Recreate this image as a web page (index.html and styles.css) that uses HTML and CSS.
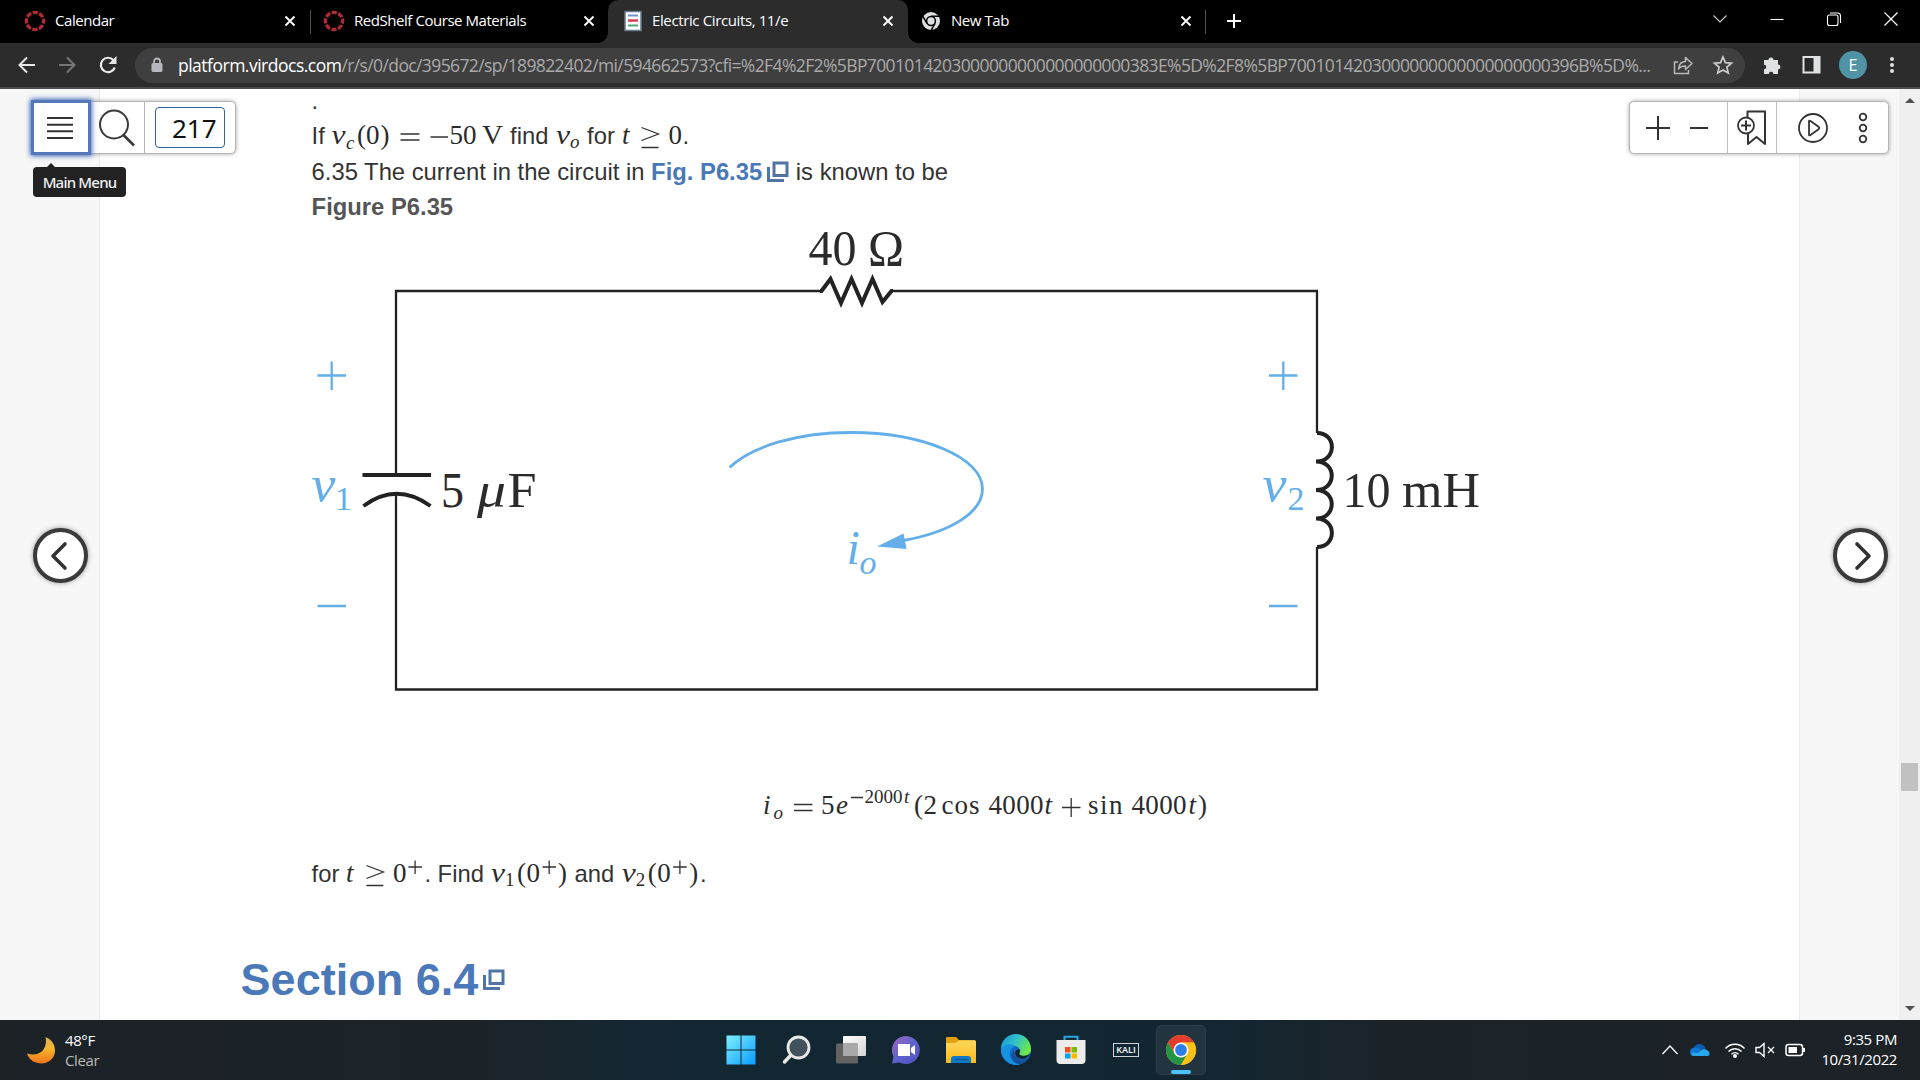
FILE: index.html
```html
<!DOCTYPE html>
<html lang="en">
<head>
<meta charset="utf-8">
<title>Electric Circuits, 11/e</title>
<link rel="stylesheet" href="styles.css">
</head>
<body>
<svg class="defs" width="0" height="0">
  <defs>
    <symbol id="x" viewBox="0 0 12 12"><path d="M1.5 1.5l9 9M10.5 1.5l-9 9" stroke="#fff" stroke-width="1.9"/></symbol>
    <symbol id="ring" viewBox="0 0 22 22"><circle cx="11" cy="11" r="8.6" fill="none" stroke="#b02a35" stroke-width="3.400" stroke-dasharray="5.2 1.55" stroke-dashoffset="2.6"/></symbol>
    <symbol id="popup" viewBox="0 0 22 22"><path d="M7 2h13v12.500H7z M1.5 6v13.500H17" fill="none" stroke="#5075a5" stroke-width="3"/></symbol>
    <linearGradient id="win" x1="0" y1="0" x2="1" y2="1"><stop offset="0" stop-color="#7df0ff"/><stop offset="1" stop-color="#0a9bff"/></linearGradient>
    <linearGradient id="moon" x1="0" y1="0" x2="0" y2="1"><stop offset="0" stop-color="#d8b05a"/><stop offset=".45" stop-color="#f6b52e"/><stop offset="1" stop-color="#f0731c"/></linearGradient>
    <linearGradient id="chat" x1="0" y1="0" x2="1" y2="1"><stop offset="0" stop-color="#a169b8"/><stop offset=".5" stop-color="#5f62cc"/><stop offset="1" stop-color="#4f51c0"/></linearGradient>
    <linearGradient id="fold" x1="0" y1="0" x2="0" y2="1"><stop offset="0" stop-color="#ffd75e"/><stop offset="1" stop-color="#fbb917"/></linearGradient>
    <linearGradient id="edge" x1="0" y1="0" x2="1" y2=".5"><stop offset="0" stop-color="#1793d6"/><stop offset=".5" stop-color="#2fc0cf"/><stop offset="1" stop-color="#6ae84a"/></linearGradient>
    <linearGradient id="tv" x1="0" y1="0" x2="1" y2="1"><stop offset="0" stop-color="#fff"/><stop offset="1" stop-color="#d4d4d4"/></linearGradient>
  </defs>
</svg>

<header class="tabs">
  <div class="tab"><svg class="fav" width="22" height="22"><use href="#ring"/></svg><span class="t1">Calendar</span><svg class="close" width="12" height="12"><use href="#x"/></svg></div>
  <div class="tab second"><svg class="fav" width="22" height="22"><use href="#ring"/></svg><span class="t2">RedShelf Course Materials</span><svg class="close" width="12" height="12"><use href="#x"/></svg></div>
  <div class="tab active"><svg class="fav" width="22" height="22" viewBox="0 0 22 22"><path d="M3 1.5h16v19H3z" fill="#fff" stroke="#66788a" stroke-width="1.5"/><path d="M6 5.5h10" stroke="#6c8fd8" stroke-width="2"/><path d="M6 10.5h10" stroke="#d03a42" stroke-width="2.4"/><path d="M6 15.5h10" stroke="#4da77c" stroke-width="2"/></svg><span class="t3">Electric Circuits, 11/e</span><svg class="close" width="12" height="12"><use href="#x"/></svg></div>
  <div class="tab last"><svg class="fav" width="22" height="22" viewBox="0 0 22 22"><circle cx="11" cy="11" r="9" fill="#dedfe0"/><circle cx="11" cy="11" r="4.4" fill="#dedfe0" stroke="#000" stroke-width="1.5"/><path d="M11 6.2h8M6.9 13.4l-4-7M15.1 13.4l-4 7" stroke="#000" stroke-width="1.5"/></svg><span class="t4">New Tab</span><svg class="close" width="12" height="12"><use href="#x"/></svg></div>
  <svg class="plus" width="16" height="16" viewBox="0 0 16 16"><path d="M8 1v14M1 8h14" stroke="#fff" stroke-width="2"/></svg>
  <div class="win">
    <svg width="16" height="16" viewBox="0 0 16 16"><path d="M1.5 4.500L8 11l6.500-6.500" fill="none" stroke="#ccc" stroke-width="1.1"/></svg>
    <svg width="16" height="16" viewBox="0 0 16 16"><path d="M1.500 8.500h13" stroke="#fff" stroke-width="1.100"/></svg>
    <svg width="16" height="16" viewBox="0 0 16 16"><rect x="1.500" y="4" width="10.500" height="10.500" rx="2" fill="none" stroke="#fff" stroke-width="1.100"/><path d="M4 2h7.500a3 3 0 0 1 3 3v7" fill="none" stroke="#fff" stroke-width="1.100"/></svg>
    <svg width="16" height="16" viewBox="0 0 16 16"><path d="M1.500 1.500l13 13M14.500 1.500l-13 13" stroke="#fff" stroke-width="1.200"/></svg>
  </div>
</header>

<nav class="toolbar">
  <svg class="back" width="20" height="20" viewBox="0 0 20 20"><path d="M18 10H3M10 2.500L2.500 10l7.500 7.500" fill="none" stroke="#e8e8e8" stroke-width="2"/></svg>
  <svg class="fwd" width="20" height="20" viewBox="0 0 20 20"><path d="M2 10h15M10 2.500l7.500 7.500-7.500 7.500" fill="none" stroke="#767676" stroke-width="2"/></svg>
  <svg class="reload" width="20" height="20" viewBox="0 0 20 20"><path d="M16.800 12.500A7.200 7.200 0 1 1 15.500 5.200" fill="none" stroke="#e8e8e8" stroke-width="2.200"/><path d="M18.500 1v8h-8z" fill="#e8e8e8"/></svg>
  <div class="omni">
    <svg class="lock" width="12" height="16" viewBox="0 0 12 16"><rect x=".5" y="6" width="11" height="9" rx="1.500" fill="#b4b7bb"/><path d="M3 7V4.500a3 3 0 0 1 6 0V7" fill="none" stroke="#b4b7bb" stroke-width="1.800"/></svg>
    <span class="url"><b>platform.virdocs.com</b>/r/s/0/doc/395672/sp/189822402/mi/594662573?cfi=%2F4%2F2%5BP7001014203000000000000000000383E%5D%2F8%5BP7001014203000000000000000000396B%5D%...</span>
    <svg class="share" width="20" height="20" viewBox="0 0 20 20"><path d="M5 7H1.500v11.500h14V15" fill="none" stroke="#b9b9b9" stroke-width="1.500"/><path d="M5.500 14c.5-5 3-7.500 7-7.500V2.500L19 8.500l-6.500 6V11c-3.500 0-5.500 1-7 3z" fill="none" stroke="#b9b9b9" stroke-width="1.500" stroke-linejoin="round"/></svg>
    <svg class="star" width="20" height="20" viewBox="0 0 20 20"><path d="M10 2l2.400 5.600 6.100.5-4.600 4 1.400 6L10 14.900 4.700 18.100l1.400-6-4.600-4 6.100-.5z" fill="none" stroke="#ccc" stroke-width="1.700"/></svg>
  </div>
  <svg class="puzzle" width="20" height="20" viewBox="0 0 20 20"><path d="M2 5h4.500a2.500 2.500 0 1 1 5 0H16v4.500a2.400 2.400 0 1 1 0 4.900V19h-4.600a2.300 2.300 0 1 0-4.600 0H2v-4.700a2.300 2.300 0 1 0 0-4.600z" fill="#e0e1e3"/></svg>
  <svg class="side" width="20" height="20" viewBox="0 0 20 20"><rect x="1.500" y="2" width="16" height="15.500" fill="#292929" stroke="#e0e1e3" stroke-width="2"/><path d="M11.500 2h6v15.500h-6z" fill="#e0e1e3"/></svg>
  <div class="avatar">E</div>
  <svg class="kebab" width="6" height="18" viewBox="0 0 6 18"><g fill="#e0e1e3"><circle cx="3" cy="3" r="2"/><circle cx="3" cy="9" r="2"/><circle cx="3" cy="15" r="2"/></g></svg>
</nav>

<main class="view">
  <article class="doc">
    <p class="line dot">.</p>
    <p class="line">If <svg class="math" width="172" height="30" viewBox="331 122 172 30"><g font-size="27"><text x="331.500" y="144" class="i" textLength="14" lengthAdjust="spacingAndGlyphs">v</text><text x="346" y="148.500" class="i" font-size="19">c</text><text x="357" y="144">(</text><text x="366" y="144" textLength="13">0</text><text x="380.500" y="144">)</text><text x="449.500" y="144">50</text><text x="482" y="144" textLength="21" lengthAdjust="spacingAndGlyphs">V</text></g><path d="M400.500 134h19M400.500 140h19M430.500 137h17.500" class="r"/></svg> find <svg class="math" width="25.4" height="30" viewBox="554.6 122 25.4 30"><text x="555.500" y="144" class="i" font-size="27" textLength="14" lengthAdjust="spacingAndGlyphs">v</text><text x="569.500" y="148.500" class="i" font-size="19">o</text></svg> for <svg class="math" width="61" height="30" viewBox="621 122 61 30"><text x="622" y="144" class="i" font-size="27">t</text><path d="M641.500 127.500l17 6.500-17 6.500M641.500 147.500h17" class="r"/><text x="668.500" y="144" font-size="27">0</text></svg>.</p>
    <p class="line">6.35 The current in the circuit in <a class="link">Fig. P6.35</a><svg class="pop" width="22" height="22"><use href="#popup"/></svg> is known to be</p>
    <p class="line cap">Figure P6.35</p>

    <svg class="circuit" width="1200" height="500" viewBox="311 222 1200 500">
      <g fill="none" stroke="#222" stroke-width="2.300">
        <path d="M396 475V291H821M892 291H1317V433M396 494V689.500H1317V547"/>
        <path d="M820 291h1.500l9-12 10.500 24 10.500-24L862 303l10.500-24L882.500 302l9-11h1.500" stroke-width="4"/>
        <path d="M362.500 475h68.500M363.500 506q33-24.500 67 0" stroke-width="4"/>
        <path d="M1317 433c20 0 20 28.500-1 28.500c21 0 21 28.500 0 28.500c21 0 21 28.500 0 28.500c21 0 21 28.500 1 28.500" stroke-width="4"/>
      </g>
      <g fill="none" stroke="#64aeea" stroke-width="2.300">
        <path d="M317.500 375.500h28.500M331.700 361.500v28.500M317.500 606h28.500M1269 375.500h28.500M1283.300 361.500v28.500M1269 606h28.500"/>
        <path d="M729.500 467.500C752 446 798 432.500 851 432.500c72 0 131.500 25 131.500 56.500c0 23-31 43-79 51.500" stroke-width="2.800"/>
        <path d="M877 546.500l26.500-13 3 15.500z" fill="#64aeea" stroke="none"/>
      </g>
      <g fill="#222" font-size="50">
        <text x="808.500" y="265" textLength="48" lengthAdjust="spacingAndGlyphs">40</text><text x="868" y="265" textLength="36" lengthAdjust="spacingAndGlyphs">Ω</text>
        <text x="441" y="507" textLength="23" lengthAdjust="spacingAndGlyphs">5</text><text x="477" y="507" class="i" textLength="29" lengthAdjust="spacingAndGlyphs">μ</text><text x="507.500" y="507" textLength="29" lengthAdjust="spacingAndGlyphs">F</text>
        <text x="1342.500" y="507" textLength="48" lengthAdjust="spacingAndGlyphs">10</text><text x="1402" y="507" textLength="78" lengthAdjust="spacingAndGlyphs">mH</text>
      </g>
      <g class="blue" font-size="50">
        <text x="311.500" y="501" class="i" textLength="24" lengthAdjust="spacingAndGlyphs">v</text><text x="335" y="510" font-size="34">1</text>
        <text x="1262.500" y="501" class="i" textLength="24" lengthAdjust="spacingAndGlyphs">v</text><text x="1287.500" y="510" font-size="34">2</text>
        <text x="846.500" y="563.500" class="i" font-size="48">i</text><text x="859.500" y="573.500" class="i" font-size="34">o</text>
      </g>
    </svg>

    <svg class="equation" width="460" height="48" viewBox="757 782 460 48">
      <g font-size="27"><text x="763" y="814" class="i">i</text><text x="773.500" y="818.500" class="i" font-size="19">o</text><text x="821" y="814">5</text><text x="836" y="814" class="i">e</text><text x="864.500" y="803" font-size="19" textLength="38">2000</text><text x="904" y="803" font-size="19" class="i">t</text><text x="914" y="814">(</text><text x="923.500" y="814">2</text><text x="941.500" y="814" textLength="38">cos</text><text x="988.500" y="814" textLength="55">4000</text><text x="1044.500" y="814" class="i">t</text><text x="1088" y="814" textLength="34.500">sin</text><text x="1131.500" y="814" textLength="55">4000</text><text x="1188.500" y="814" class="i">t</text><text x="1198" y="814">)</text></g>
      <path d="M794 804.500h18.500M794 810.500h18.500M851 797.500h12M1062 807.500h18.500M1071.200 798v19" class="r"/>
    </svg>

    <p class="line find">for <svg class="math" width="78.4" height="30" viewBox="345.6 861 78.4 30"><g font-size="27"><text x="345.500" y="883" class="i">t</text><text x="392.500" y="883">0</text></g><path d="M366 866.500l17 6.500-17 6.500M366 886.500h17M408 868h13.500M414.700 861.500v13.500" class="r"/></svg>. Find <svg class="math" width="77.4" height="30" viewBox="490 861 77.4 30"><g font-size="27"><text x="490" y="883" class="i" textLength="14" lengthAdjust="spacingAndGlyphs">v</text><text x="504" y="887" font-size="19">1</text><text x="516" y="883">(</text><text x="525.500" y="883">0</text><text x="557" y="883">)</text></g><path d="M541.500 868H555M548.200 861.500v13.500" class="r"/></svg> and <svg class="math" width="79.2" height="30" viewBox="620.3 861 79.2 30"><g font-size="27"><text x="621" y="883" class="i" textLength="14" lengthAdjust="spacingAndGlyphs">v</text><text x="635" y="887" font-size="19">2</text><text x="647" y="883">(</text><text x="656.500" y="883">0</text><text x="688.500" y="883">)</text></g><path d="M672.500 868H686M679.200 861.500v13.500" class="r"/></svg>.</p>
    <h2>Section 6.4<svg class="pop2" width="22" height="22"><use href="#popup"/></svg></h2>
  </article>

  <div class="bar left">
    <div class="menu"><svg width="28" height="24" viewBox="0 0 28 24"><path d="M1 2h26M1 8.700h26M1 15.300h26M1 22h26" stroke="#333" stroke-width="2"/></svg></div>
    <svg class="search" width="38" height="38" viewBox="0 0 38 38"><circle cx="16" cy="15.500" r="14" fill="none" stroke="#3a3a3a" stroke-width="2"/><path d="M25.500 26l10.500 10.500" stroke="#3a3a3a" stroke-width="2.600"/></svg>
    <div class="pagebox"><span class="pageno">217</span></div>
    <div class="tip">Main Menu</div>
  </div>

  <div class="bar right">
    <div class="zoom">
      <svg width="24" height="24" viewBox="0 0 24 24"><path d="M12 0v24M0 12h24" stroke="#333" stroke-width="2"/></svg>
      <svg width="18" height="24" viewBox="0 0 18 24"><path d="M0 12h18" stroke="#333" stroke-width="2"/></svg>
    </div>
    <div class="mark"><svg width="30" height="36" viewBox="0 0 30 36"><path d="M10.500 12V1.500h17.500V34l-8.500-7-8.500 7V22" fill="none" stroke="#333" stroke-width="2" stroke-linejoin="round"/><circle cx="9" cy="15.500" r="8" fill="#fff" stroke="#333" stroke-width="1.800"/><path d="M9 10.500v10M4 15.500h10" stroke="#333" stroke-width="2"/></svg></div>
    <div class="play">
      <svg width="32" height="32" viewBox="0 0 32 32"><circle cx="16" cy="16" r="14" fill="none" stroke="#333" stroke-width="1.800"/><path d="M12 9.500q0-1.500 1.500-.5l8 5.800q1.500 1.200 0 2.400l-8 5.800q-1.500 1-1.500-.5z" fill="none" stroke="#333" stroke-width="1.800"/></svg>
      <svg width="10" height="32" viewBox="0 0 10 32"><g fill="none" stroke="#333" stroke-width="1.800"><circle cx="5" cy="5" r="3.300"/><circle cx="5" cy="16" r="3.300"/><circle cx="5" cy="27" r="3.300"/></g></svg>
    </div>
  </div>

  <div class="nav prev"><svg width="48" height="48" viewBox="0 0 48 48"><path d="M28 12L16 24l12 12" fill="none" stroke="#333" stroke-width="3.600" stroke-linecap="round" stroke-linejoin="round"/></svg></div>
  <div class="nav next"><svg width="48" height="48" viewBox="0 0 48 48"><path d="M20 12l12 12-12 12" fill="none" stroke="#333" stroke-width="3.600" stroke-linecap="round" stroke-linejoin="round"/></svg></div>

  <div class="scroll">
    <svg width="10" height="5" viewBox="0 0 10 5"><path d="M0 5l5-5 5 5z" fill="#505050"/></svg>
    <div class="thumb"></div>
    <svg width="10" height="5" viewBox="0 0 10 5"><path d="M0 0l5 5 5-5z" fill="#505050"/></svg>
  </div>
</main>

<footer class="task">
  <div class="weather">
    <svg width="30" height="30" viewBox="0 0 30 30"><path d="M19.500 2C25 4 29 9 29 15.500 29 23 23 28.500 15.500 28.500 9 28.500 3 25 1 18.500c7 2.500 13 .5 16.500-4C20 11 20.500 6 19.500 2z" fill="url(#moon)"/></svg>
    <div class="wx"><span>48°F</span><span class="dim">Clear</span></div>
  </div>
  <div class="apps">
    <div class="app"><svg width="30" height="30" viewBox="0 0 30 30"><path d="M.5.500h14v14h-14zM15.500.500h14v14h-14zM.5 15.500h14v14h-14zM15.500 15.500h14v14h-14z" fill="url(#win)"/></svg></div>
    <div class="app"><svg width="30" height="30" viewBox="0 0 30 30"><path d="M10 20L3.500 27" stroke="#e8e8e8" stroke-width="3.500" stroke-linecap="round"/><circle cx="17.500" cy="12.500" r="10.500" fill="#42525c" stroke="#e8e8e8" stroke-width="2.800"/></svg></div>
    <div class="app"><svg width="30" height="30" viewBox="0 0 30 30"><rect x="7" y="1" width="23" height="20" rx="1" fill="url(#tv)"/><rect x="0" y="8.500" width="22" height="20" rx="1" fill="#626262"/><path d="M7 8.500h15V21H7z" fill="#a9a9a9"/></svg></div>
    <div class="app"><svg width="30" height="30" viewBox="0 0 30 30"><path d="M15 1a14 14 0 1 1-6.500 26.500L1 28.500l1.500-7A14 14 0 0 1 15 1z" fill="url(#chat)"/><path d="M7 9h12v12H7zM20 13l4-3v10l-4-3z" fill="#fff"/></svg></div>
    <div class="app"><svg width="30" height="30" viewBox="0 0 30 30"><path d="M0 3q0-1 1-1h9l3 3h16v6H0z" fill="#e29f10"/><path d="M0 8l10-.2 3-2.300h16q1 0 1 1V28H0z" fill="url(#fold)"/><path d="M5 28v-4q0-3 3-3h14q3 0 3 3v4z" fill="#0f78c8"/><path d="M9 24.500h12.500" stroke="#0b5292" stroke-width="1.200"/></svg></div>
    <div class="app"><svg width="30" height="30" viewBox="0 0 30 30"><circle cx="15" cy="15" r="15" fill="#1267c4"/><path d="M0 15A15 15 0 0 1 30 13c.5 6-4 8.500-9 8-4-.4-3.500-2.500-2.500-3.500 1.500-4-2-6.500-5.500-6.500C6 10 1 12 0 15z" fill="url(#edge)"/><path d="M0 15C2 9 10 8 14 11c-6 3-7 10-3 14 2 2.500 5 4 8 4.400C9 32 0 24 0 15z" fill="#1591df"/><path d="M14 14c-3 6 3 13 13 9.500-2 3-5 5.500-8.500 6C11 28 8 20 14 14z" fill="#14509a"/><path d="M19 16.500c-1.500 2-.5 4 3 4.300 3 .3 6-1 7-2.500-2 4.500-5 6.200-9 5.500-5-1-7-5-5-8 1-2.300 5-2.300 4 .7z" fill="#122632"/></svg></div>
    <div class="app"><svg width="30" height="30" viewBox="0 0 30 30"><path d="M8.500 6V1.800h13V6" fill="none" stroke="#28a8e0" stroke-width="2"/><path d="M.5 5h29v20q0 4-4 4h-21q-4 0-4-4z" fill="#ececec"/><path d="M9 12h5.500v5.500H9z" fill="#f25022"/><path d="M15.500 12H21v5.500h-5.500z" fill="#7fba00"/><path d="M9 18.500h5.500v5H9z" fill="#00a4ef"/><path d="M15.500 18.500H21v5h-5.500z" fill="#ffb900"/></svg></div>
    <div class="app"><span class="kali">KALI</span></div>
    <div class="app on"><svg width="30" height="30" viewBox="0 0 30 30"><circle cx="15" cy="15" r="15" fill="#fbc116"/><path d="M2 7.500A15 15 0 0 1 28 7.500H15L8.500 18.700z" fill="#e33b2e"/><path d="M2 7.500l6.500 11.300 13 0L15 30A15 15 0 0 1 2 7.500z" fill="#219446"/><path d="M28 7.500H15l6.500 11.200L15 30A15 15 0 0 0 28 7.500z" fill="#fbc116"/><circle cx="15" cy="15" r="7.500" fill="#fff"/><circle cx="15" cy="15" r="5.900" fill="#2f7de9"/></svg></div>
  </div>
  <div class="tray">
    <svg class="up" width="18" height="18" viewBox="0 0 18 18"><path d="M1.500 13L9 5l7.500 8" fill="none" stroke="#fff" stroke-width="1.300"/></svg>
    <svg class="cloud" width="20" height="14" viewBox="0 0 20 14"><path d="M3 8C3 3 6 1 9.500 1 13 1 15 3 15.500 6L10 10z" fill="#0a5bb0"/><path d="M4 13a4 4 0 0 1 0-8c3-1 6 0 8 3l3 5z" fill="#0f78d4"/><path d="M5 13l6-5.500c2-2 6-2 8 1.500 1.500 2.500 0 4-2 4z" fill="#28a8ea"/><path d="M1 11q2-3 9 0l8 1.500-1 .5H4q-2 0-3-2z" fill="#28a8ea"/></svg>
    <svg class="wifi" width="22" height="18" viewBox="0 0 22 18"><g fill="none" stroke="#fff" stroke-width="1.500"><path d="M1.500 7.500a13 13 0 0 1 19 0M4.500 10.500a9 9 0 0 1 13 0M7.500 13.200a5 5 0 0 1 7 0"/></g><circle cx="11" cy="15" r="2" fill="#fff"/></svg>
    <svg class="snd" width="20" height="16" viewBox="0 0 20 16"><path d="M1 5.500h3.500L9 1.500v13L4.500 10.500H1z" fill="none" stroke="#fff" stroke-width="1.400"/><path d="M13 5l6 6M19 5l-6 6" stroke="#fff" stroke-width="1.300"/></svg>
    <svg class="bat" width="21" height="14" viewBox="0 0 21 14"><rect x="1" y="1.500" width="16.500" height="11" rx="2.500" fill="none" stroke="#fff" stroke-width="1.500"/><path d="M3.500 4H12v6H3.500zM18 5h2v4h-2z" fill="#fff"/></svg>
    <div class="clock"><span>9:35 PM</span><span>10/31/2022</span></div>
  </div>
</footer>
</body>
</html>
```
FILE: styles.css
```css
* { box-sizing: border-box; }
body { margin: 0; width: 1920px; height: 1080px; overflow: hidden; display: flex; flex-direction: column; font-family: "Open Sans", "Noto Sans", sans-serif; background: #fff; }
svg { display: block; flex: none; overflow: visible; }
.defs { position: absolute; }
p, h2 { margin: 0; }

.tabs { height: 43px; background: #000; display: flex; align-items: center; color: #fff; font-size: 15px; flex: none; }
.tab { height: 43px; width: 311px; padding: 0 15px 1px 24px; display: flex; align-items: center; white-space: nowrap; position: relative; }
.tab .fav { margin-right: 9px; }
.tab .close { margin-left: auto; }
.tab:first-child::after, .last::after { content: ""; position: absolute; right: 0; top: 10px; width: 1px; height: 24px; background: #505050; }
.second { width: 297px; padding: 0 13px 1px 12px; }
.active { width: 300px; background: #2c2c2c; border-radius: 10px 10px 0 0; padding: 0 14px 1px 14px; }
.active .fav { margin-right: 8px; }
.active::before, .active::after { content: ""; position: absolute; bottom: 0; width: 10px; height: 10px; }
.active::before { left: -10px; background: radial-gradient(circle at 0 0, transparent 9.5px, #2c2c2c 10px); }
.active::after { right: -10px; background: radial-gradient(circle at 100% 0, transparent 9.5px, #2c2c2c 10px); }
.last { width: 298px; padding: 0 14px 1px 12px; }
.t1, .t2, .t3, .t4 { letter-spacing: -0.45px; padding-bottom: 2px; }
.t3 { letter-spacing: -0.38px; }
.plus { margin: 0 0 1px 20px; }
.win { margin: 0 21px 6px auto; display: flex; gap: 41px; }

.toolbar { height: 46px; flex: none; background: #2c2c2c; border-bottom: 2px solid #4c4c4c; display: flex; align-items: center; }
.back { margin-left: 17px; }
.fwd { margin-left: 20px; }
.reload { margin-left: 21px; }
.omni { margin-left: 17px; width: 1610px; height: 35px; border-radius: 18px; background: #3f3f3f; display: flex; align-items: center; }
.lock { margin-left: 16px; }
.url { margin-left: 15px; width: 1489px; font-size: 17.5px; color: #aaa; white-space: nowrap; letter-spacing: -0.615px; }
.url b { color: #fff; font-weight: 400; letter-spacing: -0.5px; }
.star { margin-left: 20px; }
.share { margin-left: 6px; }
.puzzle { margin-left: 17px; }
.side { margin-left: 20px; }
.avatar { margin-left: 17px; width: 28px; height: 28px; border-radius: 50%; background: #4f93a5; color: #fff; font-size: 16px; line-height: 28px; text-align: center; }
.kebab { margin-left: 22px; }

.view { height: 931px; flex: none; position: relative; overflow: hidden; background: #f7f7f7; display: flex; }
.doc { margin-left: 99px; width: 1701px; background: #fff; border: solid #eaeaea; border-width: 0 1px; padding-left: 211.6px; font-family: "Liberation Sans", Arial, sans-serif; font-size: 23.8px; color: #333; }
.line { line-height: 36px; height: 36px; white-space: pre; }
.dot { line-height: 24px; height: 29px; }
.cap { height: 32px; font-weight: 700; color: #555; margin-top: -1px; }
.math { display: inline-block; vertical-align: -8px; }
.pop { display: inline-block; vertical-align: -3px; margin-left: 5px; }
.link { color: #4a78b8; font-weight: 700; }
svg text { font-family: "Liberation Serif", "Times New Roman", serif; fill: #2b2b2b; }
svg text.i { font-style: italic; }
svg .blue text { fill: #64aeea; }
.r { fill: none; stroke: #333; stroke-width: 1.3; }
.circuit { margin: 1px 0 0 -0.6px; }
.equation { margin: 60px 0 26px 445.4px; }
h2 { margin: 61px 0 0 -71px; font-size: 45px; line-height: 54px; color: #4a78b8; white-space: nowrap; }
.pop2 { display: inline-block; vertical-align: 4px; margin-left: 5px; }

.bar { position: absolute; top: 12px; height: 53px; background: #fff; border: 1px solid #b5b5b5; border-radius: 5px; box-shadow: 0 0 4px rgba(0,0,0,.35); display: flex; align-items: center; }
.left { left: 32px; width: 204px; }
.menu { width: 60px; height: 55px; margin-left: -2px; border: 3px solid #5578b8; box-shadow: 0 0 5px 1px #4a70c0; display: flex; align-items: center; justify-content: center; background: #fff; flex: none; padding-right: 2px; }
.search { margin-left: 7px; }
.pagebox { margin-left: 8px; height: 51px; border-left: 1px solid #b5b5b5; padding: 5px 0 0 10px; }
.pageno { display: block; width: 70px; height: 41px; border: 1px solid #2f6493; border-radius: 4px; font: 26px/40px "Noto Sans", sans-serif; padding-left: 16px; color: #111; }
.tip { position: absolute; left: 0; top: 65px; width: 93px; height: 30px; border-radius: 4px; background: #222; color: #f0f0f0; font: 500 15px/30px "Noto Sans", sans-serif; text-align: center; white-space: nowrap; letter-spacing: -0.8px; }
.tip::before { content: ""; position: absolute; left: 13px; top: -4px; border: solid transparent; border-width: 0 5px 5px; border-bottom-color: #222; }
.right { left: 1629px; width: 260px; }
.zoom { width: 97px; display: flex; gap: 20px; padding-left: 16px; }
.mark { width: 50px; height: 51px; border: solid #c0c0c0; border-width: 0 1px; display: flex; align-items: center; justify-content: center; }
.play { display: flex; gap: 29px; padding-left: 20px; }
.nav { position: absolute; top: 439px; width: 55px; height: 55px; border: 4px solid #3a3a3a; border-radius: 50%; background: #fff; box-shadow: 0 0 5px rgba(0,0,0,.4); }
.prev { left: 33px; }
.next { left: 1833px; }
.nav svg { margin: -0.5px; }
.scroll { position: absolute; right: 0; top: 0; width: 21px; height: 931px; background: #f0f0f0; display: flex; flex-direction: column; align-items: center; padding: 9px 0 9px; }
.thumb { width: 17px; height: 28px; background: #c1c1c1; margin: 660px 0 auto; }

.task { height: 60px; flex: none; background: linear-gradient(90deg, #1c2226 0, #1b2329 25%, #132733 35%, #122632 62%, #1b2329 72%, #1c2226 100%); display: flex; align-items: center; color: #fff; position: relative; }
.weather { width: 716px; padding-left: 26px; display: flex; gap: 9px; align-items: center; }
.wx, .clock { display: flex; flex-direction: column; font-size: 15px; line-height: 20px; letter-spacing: -0.4px; padding-bottom: 1px; }
.dim { color: #bbb; }
.apps { display: flex; gap: 5px; }
.app { width: 50px; height: 50px; display: flex; align-items: center; justify-content: center; position: relative; }
.on { background: #22343f; border: 1px solid #2c3e48; border-radius: 5px; }
.on::after { content: ""; position: absolute; bottom: 0; width: 20px; height: 4px; border-radius: 2px; background: #4cc2ff; }
.kali { border: 1px solid #cdd3d6; font-size: 9px; line-height: 12px; width: 26px; height: 14px; text-align: center; font-weight: 600; }
.tray { margin-left: auto; display: flex; align-items: center; padding-right: 23px; }
.cloud { margin-left: 11px; }
.wifi { margin-left: 14px; }
.snd { margin-left: 9px; }
.bat { margin-left: 10px; }
.clock { width: 91px; text-align: right; padding-bottom: 2px; }
```
